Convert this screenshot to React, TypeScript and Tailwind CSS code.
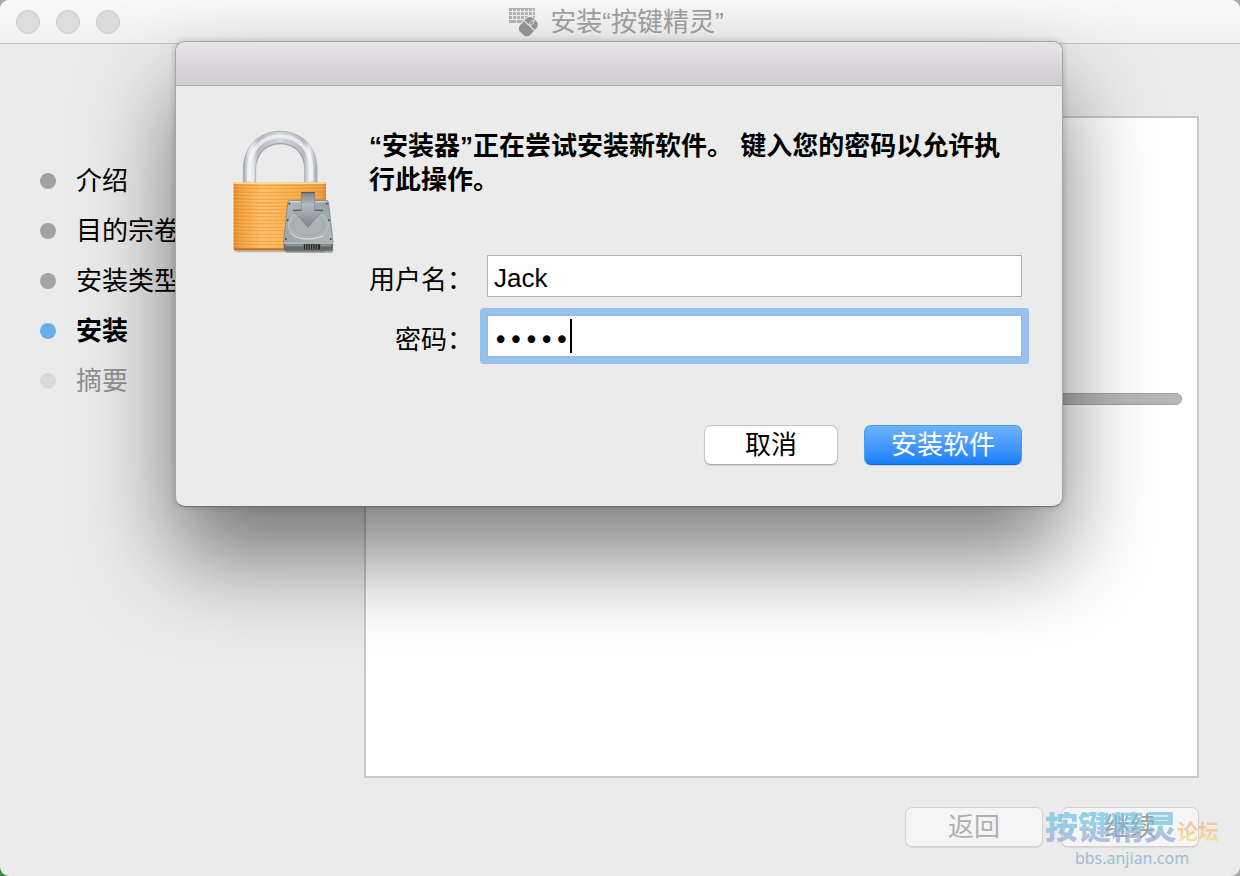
import clsx from "clsx";

const steps = [
  { label: "介绍", state: "done" },
  { label: "目的宗卷", state: "done" },
  { label: "安装类型", state: "done" },
  { label: "安装", state: "current" },
  { label: "摘要", state: "pending" },
];

const KeyboardIcon = () => (
  <svg width="32" height="30" viewBox="0 0 32 30" aria-hidden="true">
    <rect x="1" y="1" width="26" height="15" rx="1" fill="#b4b4b4" />
    <path
      d="M1 4.500H27M1 8.500H27M1 12.500H27M4.500 2V12M8.500 2V16M12.500 2V12M16.500 2V12M20.500 2V16M24.500 2V12"
      stroke="#efefef"
      strokeWidth="1"
    />
    <g transform="rotate(42 20 20)">
      <rect x="12" y="9" width="16" height="21" rx="6" fill="#f2f2f2" />
      <rect x="13" y="10" width="14" height="19" rx="5" fill="#979797" />
      <path d="M13 18H27M20 10V18" stroke="#ececec" strokeWidth="1.200" />
      <rect x="18.500" y="12" width="3" height="5" rx="1.500" fill="#a5a5a5" stroke="#ececec" strokeWidth=".8" />
    </g>
  </svg>
);

const LockIcon = () => (
  <svg
    className="shrink-0"
    width="102"
    height="124"
    viewBox="36 24 306 372"
    aria-hidden="true"
  >
    <defs>
      <linearGradient id="steel" x1="0" x2="1">
        <stop offset="0" stopColor="#a3a6ad" />
        <stop offset=".06" stopColor="#d9dce0" />
        <stop offset=".12" stopColor="#eceff2" />
        <stop offset=".2" stopColor="#b4b8bf" />
        <stop offset=".5" stopColor="#d3d7de" />
        <stop offset=".82" stopColor="#b4b8bf" />
        <stop offset=".9" stopColor="#eceff2" />
        <stop offset="1" stopColor="#a3a6ad" />
      </linearGradient>
      <linearGradient id="brass" x1="0" x2="1">
        <stop offset="0" stopColor="#d9852a" />
        <stop offset=".06" stopColor="#f39b36" />
        <stop offset=".3" stopColor="#ffc06a" />
        <stop offset=".6" stopColor="#fdb04f" />
        <stop offset=".95" stopColor="#f09a35" />
        <stop offset="1" stopColor="#d4812a" />
      </linearGradient>
      <linearGradient id="drive" x1="0" y1="0" x2="1" y2="1">
        <stop offset="0" stopColor="#b4bcbe" />
        <stop offset=".5" stopColor="#9ba4a7" />
        <stop offset="1" stopColor="#b4bbbd" />
      </linearGradient>
      <linearGradient id="arrow" x1="0" y1="0" x2="0" y2="1">
        <stop offset="0" stopColor="#788184" />
        <stop offset=".35" stopColor="#b4babd" />
        <stop offset="1" stopColor="#7b8487" />
      </linearGradient>
      <pattern id="ridges" width="10" height="10.500" patternUnits="userSpaceOnUse">
        <rect y="3" width="10" height="3" fill="#e58b28" opacity=".65" />
        <rect y="6" width="10" height="2" fill="#ffd594" opacity=".5" />
      </pattern>
    </defs>

    {/* shackle */}
    <path
      d="M70 188V144C70 76 118 31 181 31S291 76 291 144V188H254V146C254 98 222 69 181 69S107 98 107 146V188Z"
      fill="url(#steel)"
      stroke="#9b9ea4"
      strokeWidth="2"
    />
    <path
      d="M87 180V144C87 84 130 46 181 46S274 84 274 144V180"
      fill="none"
      stroke="#f6f8fa"
      strokeWidth="12"
      opacity=".7"
    />
    <path
      d="M110 124C118 88 146 67 181 67S244 88 252 124"
      fill="none"
      stroke="#8a8e95"
      strokeWidth="3"
      opacity=".6"
    />

    {/* body */}
    <path d="M42 388H318L312 394H50Z" fill="#8a8a8a" opacity=".5" />
    <rect x="41" y="184" width="277" height="204" rx="4" fill="url(#brass)" />
    <rect x="41" y="190" width="277" height="192" fill="url(#ridges)" />
    <rect x="43" y="184" width="273" height="5" fill="#ffdca6" />
    <rect x="43" y="382" width="273" height="6" fill="#bd6f20" />

    {/* disk drive */}
    <path d="M192 386H342L336 395H200Z" fill="#666" opacity=".55" />
    <path
      d="M210 238H318Q325 238 326 245L339 364H191L203 245Q204 238 210 238Z"
      fill="url(#drive)"
      stroke="#6f787b"
      strokeWidth="2"
    />
    <path d="M208 242H321" stroke="#d6dbdc" strokeWidth="3" />
    <ellipse cx="265" cy="312" rx="60" ry="44" fill="#abb3b5" stroke="#c3c9cb" strokeWidth="3" />
    <ellipse cx="265" cy="312" rx="46" ry="32" fill="none" stroke="#959ea1" strokeWidth="2" />
    <path d="M208 335Q236 366 310 346" fill="none" stroke="#d5dadb" strokeWidth="3" />
    <path d="M191 364H339V384Q339 389 333 389H197Q191 389 191 384Z" fill="#626a6d" />
    <path d="M192 366H338" stroke="#c9cfd1" strokeWidth="4" />
    <rect x="252" y="370" width="48" height="15" fill="#24282a" />
    <path
      d="M257 371V384M264 371V384M271 371V384M278 371V384M285 371V384M292 371V384"
      stroke="#a8afb1"
      strokeWidth="2"
    />
    <path d="M196 373H250M302 373H334" stroke="#8d9699" strokeWidth="6" />
    <g fill="#41484b">
      <circle cx="208" cy="248" r="3" />
      <circle cx="320" cy="248" r="3" />
      <circle cx="203" cy="298" r="3" />
      <circle cx="326" cy="298" r="3" />
      <circle cx="198" cy="354" r="3" />
      <circle cx="332" cy="354" r="3" />
    </g>
    <path
      d="M244 214H284V267H309L264 319L219 267H244Z"
      fill="url(#arrow)"
      stroke="#7a8386"
      strokeWidth="2"
    />
    <path d="M219 268H244M284 268H309M244 215H284" stroke="#4d5558" strokeWidth="3" />
  </svg>
);

const AuthSheet = () => {
  return (
    <form
      role="dialog"
      aria-label="安装器"
      onSubmit={(e) => e.preventDefault()}
      className="w-[888px] rounded-[10px] border border-[#a6a6a6] border-b-[#707070] bg-[#ebebeb] shadow-[0_50px_90px_rgba(0,0,0,0.5),0_0_6px_rgba(0,0,0,0.2)]"
    >
      <div className="h-11 rounded-t-[9px] border-b border-[#a9a9a9] bg-linear-to-b from-[#e8e5e8] to-[#cfcccf]" />
      <div className="flex gap-[35px] pt-[43px] pr-10 pb-[41px] pl-14">
        <LockIcon />
        <div className="flex-1">
          <p className="text-[26px] leading-[34px] font-bold">
            “安装器”正在尝试安装新软件。 键入您的密码以允许执行此操作。
          </p>
          <div className="mt-[58px] grid grid-cols-[104px_1fr] items-center gap-x-[14px] gap-y-[18px]">
            <label htmlFor="username" className="pt-2 text-right leading-8">
              用户名：
            </label>
            <input
              id="username"
              type="text"
              defaultValue="Jack"
              className="h-[42px] w-full border border-[#b0b0b0] bg-white px-[6px] pt-1 outline-none"
            />
            <label htmlFor="password" className="pt-2 text-right leading-8">
              密码：
            </label>
            <div className="relative">
              <input
                id="password"
                type="password"
                defaultValue="admin"
                className="block h-[42px] w-full rounded-[1px] border border-[#a5b6cb] bg-white px-[5px] pt-2 font-['DejaVu_Sans'] caret-transparent shadow-[0_0_0_7px_#99c1f0] outline-none"
              />
              <span className="absolute top-1 left-[83px] h-[34px] w-[2px] bg-black" />
            </div>
          </div>
          <div className="mt-[68px] flex justify-end gap-[26px]">
            <button
              type="button"
              className="h-10 w-[134px] rounded-[7px] border border-[#c4c4c4] border-b-[#adadad] bg-white leading-none shadow-[0_1px_1px_rgba(0,0,0,0.12)]"
            >
              取消
            </button>
            <button
              type="submit"
              className="h-10 w-[158px] rounded-[7px] border border-[#4a9aef] border-b-[#1567d8] bg-linear-to-b from-[#6db3fa] to-[#157efb] leading-none text-white shadow-[0_1px_1px_rgba(0,0,0,0.12)]"
            >
              安装软件
            </button>
          </div>
        </div>
      </div>
    </form>
  );
};

const Watermark = () => (
  <div className="pointer-events-none absolute right-[21px] bottom-2 flex flex-col items-center">
    <div className="flex items-end leading-none">
      <span className="bg-linear-to-b from-[#6cc0e0]/70 from-30% to-[#94a6cf]/70 to-90% bg-clip-text text-[33px] leading-8 font-black text-transparent">
        按键精灵
      </span>
      <span className="bg-linear-to-b from-[#f5bd8c]/80 from-30% to-[#f2dc8a]/80 to-80% bg-clip-text text-[21px] leading-6 font-bold text-transparent">
        论坛
      </span>
    </div>
    <span className="pt-1 font-['Noto_Sans'] text-base leading-5 text-[#9dbdd6]">
      bbs.anjian.com
    </span>
  </div>
);

export default function App() {
  return (
    <div
      lang="zh-CN"
      className="min-h-screen bg-linear-to-tr from-[#2f8f3c] via-[#a8a8a8] via-10% to-[#a8a8a8] font-['Liberation_Sans','Noto_Sans_CJK_SC',sans-serif] text-[26px] text-black"
    >
      <div className="relative flex min-h-screen flex-col overflow-hidden rounded-[9px] bg-[#ebebeb]">
        <header className="grid h-11 shrink-0 grid-cols-[1fr_auto_1fr] items-center border-b border-[#c6c6c6] bg-linear-to-b from-[#f8f8f8] to-[#f1f1f1]">
          <div className="flex gap-4 pl-4">
            <button type="button" aria-label="关闭" className="size-6 rounded-full border border-[#cbcbcb] bg-[#dcdcdc]" />
            <button type="button" aria-label="最小化" className="size-6 rounded-full border border-[#cbcbcb] bg-[#dcdcdc]" />
            <button type="button" aria-label="缩放" className="size-6 rounded-full border border-[#cbcbcb] bg-[#dcdcdc]" />
          </div>
          <h1 className="flex items-center gap-[10px] pr-2 leading-8 text-[#a0a0a0]">
            <KeyboardIcon />
            安装“按键精灵”
          </h1>
        </header>

        <main className="flex flex-1 pt-[72px] pr-[41px] pb-[29px]">
          <ol className="w-[364px] shrink-0 pt-10 pl-10">
            {steps.map((step) => (
              <li
                key={step.label}
                className={clsx(
                  "flex h-[50px] items-center gap-5",
                  step.state === "current" && "font-bold",
                  step.state === "pending" && "text-[#929292]"
                )}
              >
                <span
                  className={clsx(
                    "size-4 rounded-full",
                    step.state === "done" && "bg-[#a3a3a3]",
                    step.state === "current" && "bg-[#65b0ec]",
                    step.state === "pending" && "bg-[#d8d8d8]"
                  )}
                />
                {step.label}
              </li>
            ))}
          </ol>
          <div className="flex flex-1 flex-col">
            <section className="flex-1 border-2 border-[#c8c8c8] bg-white px-[15px] pt-[275px]">
              <div
                role="progressbar"
                aria-label="安装"
                className="h-3 rounded-full border border-[#a2a2a2] bg-[#b7b7b7]"
              />
            </section>
            <div className="mt-[29px] flex justify-end gap-[18px]">
              <button
                type="button"
                disabled
                className="h-10 w-[138px] rounded-[7px] border border-[#d2d2d2] bg-[#f5f5f5] leading-none text-[#b0b0b0] shadow-[0_1px_1px_rgba(0,0,0,0.08)]"
              >
                返回
              </button>
              <button
                type="button"
                disabled
                className="h-10 w-[138px] rounded-[7px] border border-[#d2d2d2] bg-[#f5f5f5] leading-none text-[#a0a0a0] shadow-[0_1px_1px_rgba(0,0,0,0.08)]"
              >
                继续
              </button>
            </div>
          </div>
        </main>

        {/* the sheet drops from under the title bar */}
        <div className="absolute inset-x-0 top-[41px] flex justify-center pr-[2px]">
          <AuthSheet />
        </div>

        <Watermark />
      </div>
    </div>
  );
}
